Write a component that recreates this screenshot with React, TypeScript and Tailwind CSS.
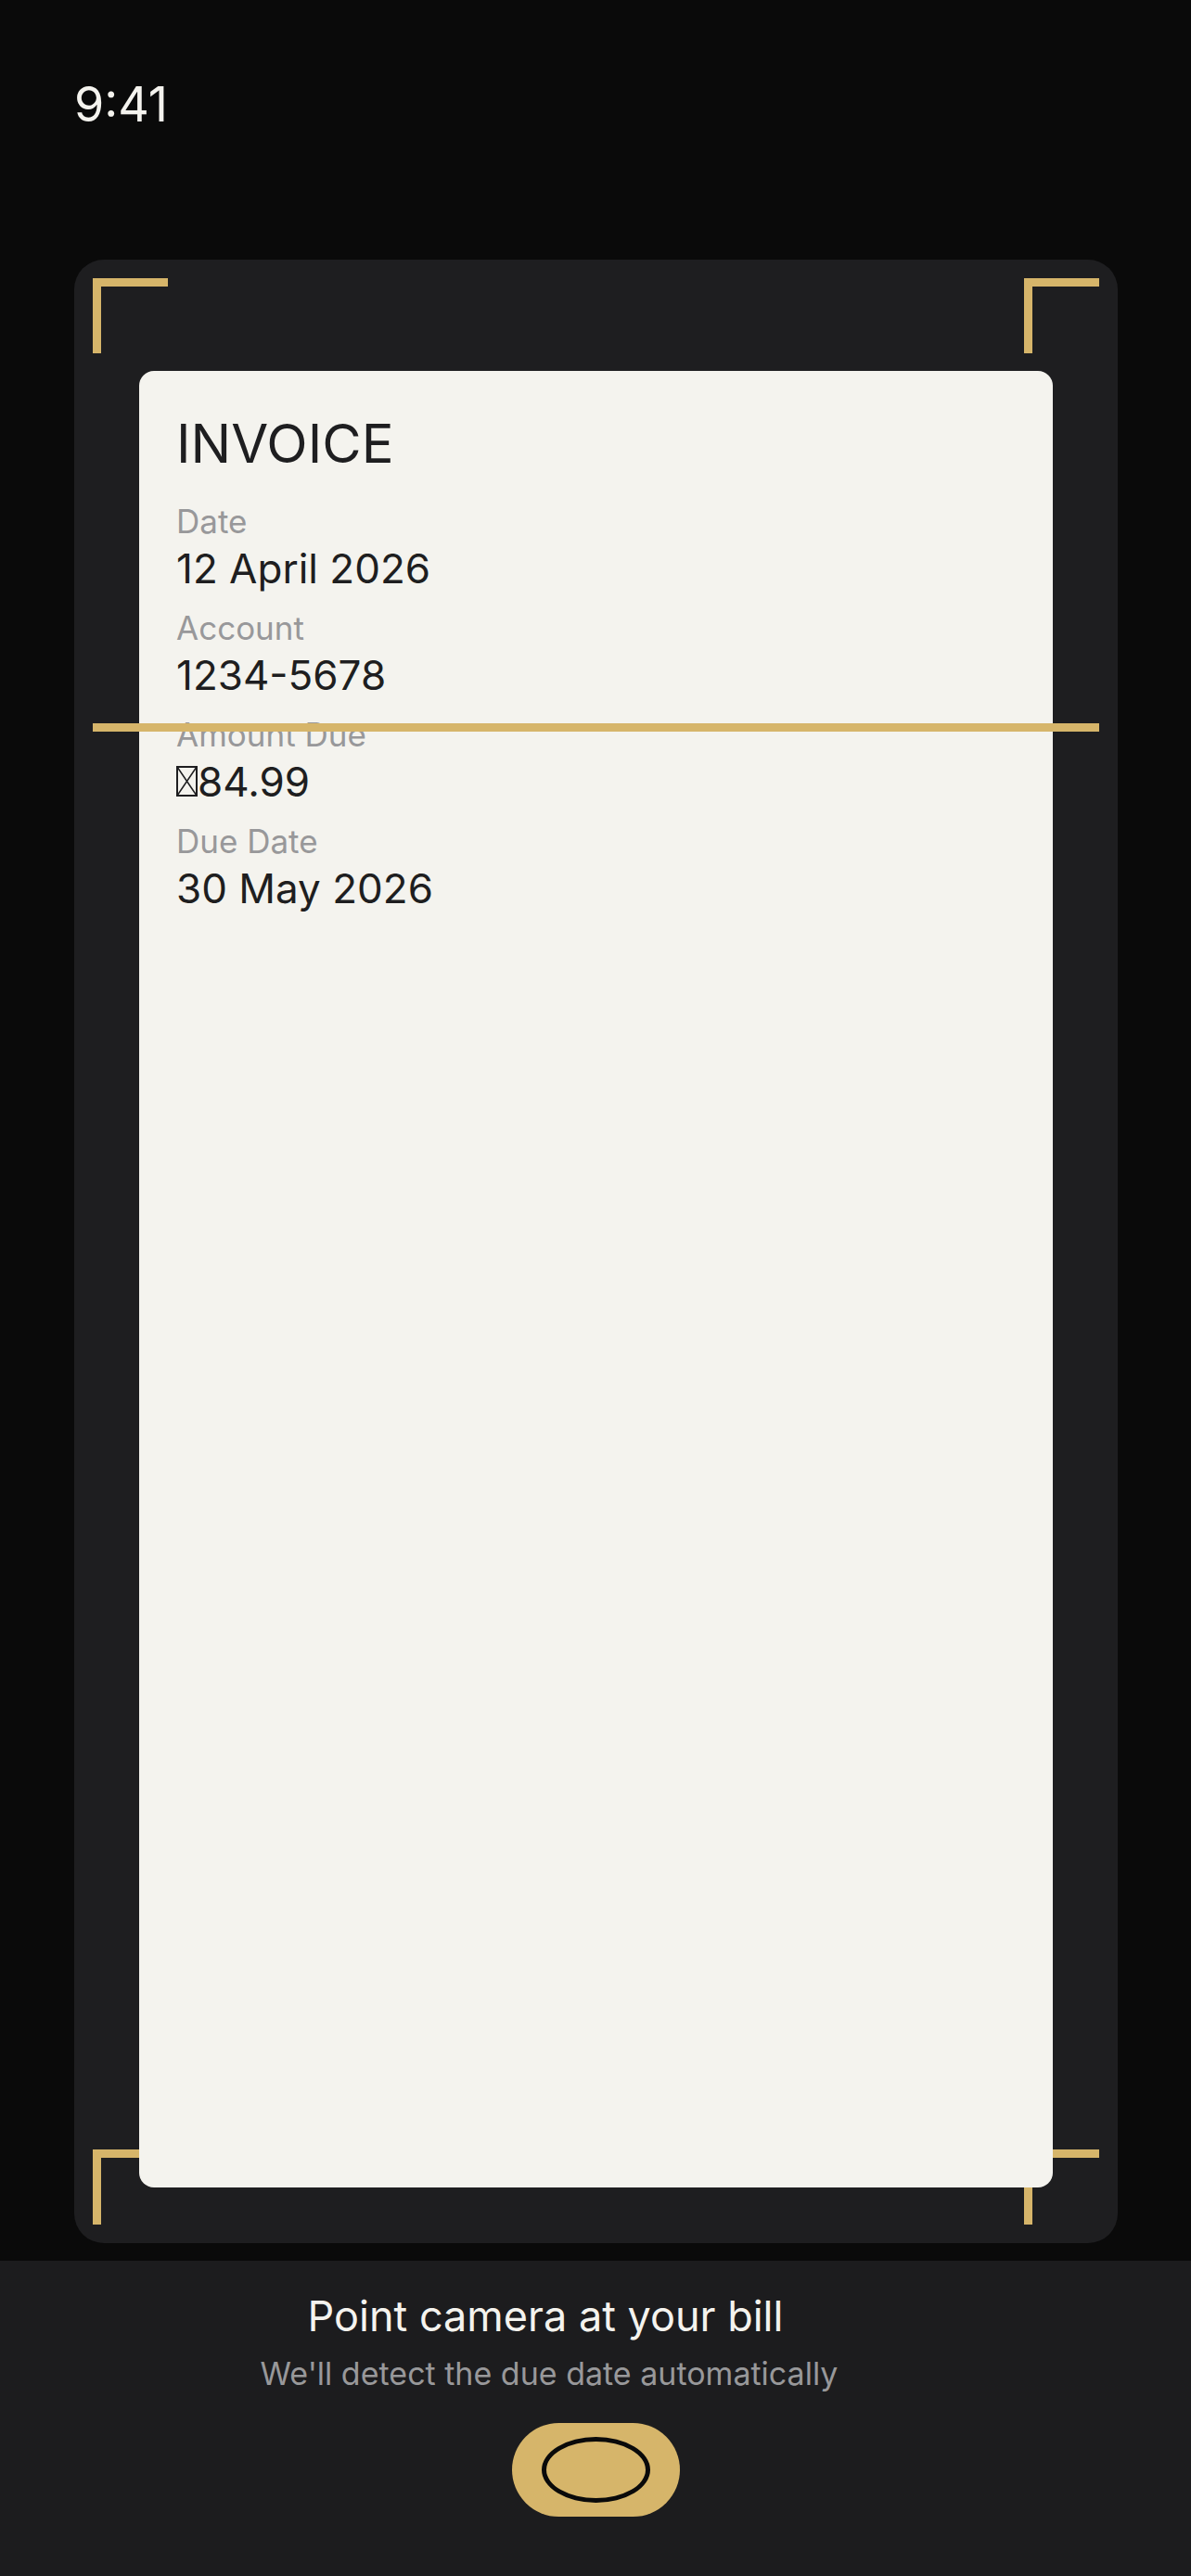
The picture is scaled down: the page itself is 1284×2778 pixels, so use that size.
const fields = [
  { label: "Date", value: "12 April 2026" },
  { label: "Account", value: "1234-5678" },
  { label: "Amount Due", value: "84.99", missingCurrency: true },
  { label: "Due Date", value: "30 May 2026" },
];

function Corner({ place }: { place: string }) {
  return (
    <span
      aria-hidden="true"
      className={`absolute size-[81px] border-t-[9px] border-l-[9px] border-[#d6b56a] ${place}`}
    />
  );
}

function MissingGlyph() {
  return (
    <svg
      role="img"
      aria-label="currency"
      viewBox="0 0 23 33"
      className="inline-block h-[33px] w-[23px] align-baseline"
      fill="none"
      stroke="currentColor"
    >
      <rect x="1" y="1" width="21" height="31" strokeWidth="2" />
      <path d="M1 1 22 32M22 1 1 32" strokeWidth="1.5" />
    </svg>
  );
}

function Invoice() {
  return (
    <article className="relative flex-1 rounded-[16px] bg-[#f4f3ee] px-[40px] py-[40px] text-[#1e1e20]">
      <h1 className="text-[58px] leading-[76px]">INVOICE</h1>
      <dl className="mt-[23px] flex flex-col gap-[13px]">
        {fields.map((f) => (
          <div key={f.label}>
            <dt className="text-[35px] leading-[46px] text-[#98989a]">{f.label}</dt>
            <dd className="text-[44px] leading-[56px]">
              {f.missingCurrency && <MissingGlyph />}
              {f.value}
            </dd>
          </div>
        ))}
      </dl>
    </article>
  );
}

export default function App() {
  return (
    <div className="flex min-h-screen flex-col bg-[#0a0a0a] font-['Inter',sans-serif]">
      <header className="px-[80px] pt-[80px] pb-[134px] text-[52px] leading-[66px] text-[#f4f3ee]">
        <time>9:41</time>
      </header>

      <main className="relative mr-[79px] mb-[19px] ml-[80px] flex flex-1 flex-col rounded-[32px] bg-[#1e1e20] px-[70px] pt-[120px] pb-[60px]">
        <Corner place="top-[20px] left-[20px]" />
        <Corner place="top-[20px] right-[20px]" />
        <Corner place="bottom-[20px] left-[20px]" />
        <Corner place="right-[20px] bottom-[20px]" />
        <Invoice />
        <span
          aria-hidden="true"
          className="absolute top-[500px] right-[20px] left-[20px] h-[9px] bg-[#d6b56a]"
        />
      </main>

      <footer className="flex flex-col items-center bg-[#1c1c1e] pt-[32px] pb-[64px]">
        <p className="mr-[108px] text-[45px] leading-[56px] text-[#f4f3ee]">Point camera at your bill</p>
        <p className="mt-[11px] mr-[100px] text-[34px] leading-[46px] text-[#98989a]">
          We'll detect the due date automatically
        </p>
        <button
          type="button"
          aria-label="Take photo"
          className="mt-[30px] flex h-[101px] w-[181px] items-center justify-center rounded-full bg-[#d6b56a]"
        >
          <span className="h-[71px] w-[117px] rounded-[50%] border-[5px] border-[#0a0a0a]" />
        </button>
      </footer>
    </div>
  );
}
